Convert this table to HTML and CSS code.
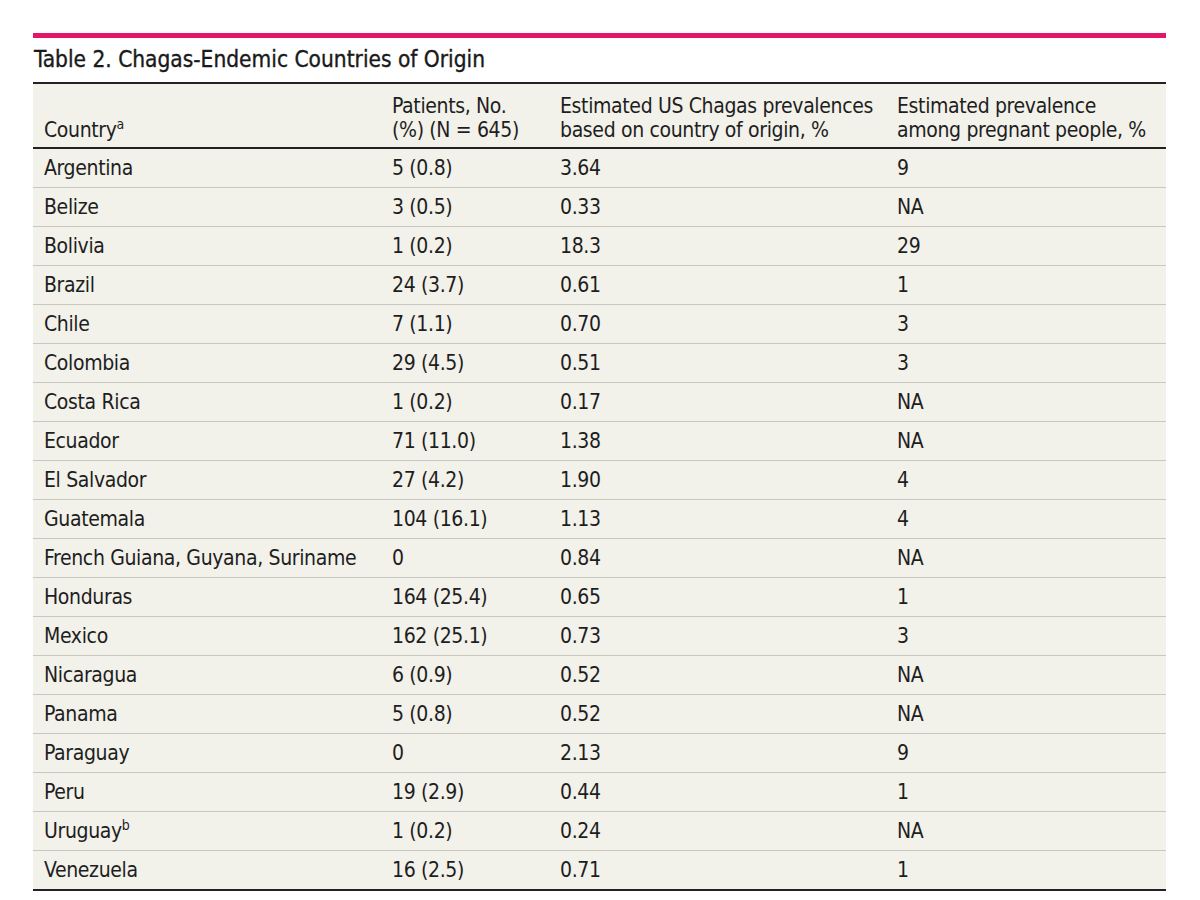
FILE: index.html
```html
<!DOCTYPE html>
<html lang="en">
<head>
<meta charset="utf-8">
<title>Table 2. Chagas-Endemic Countries of Origin</title>
<link rel="stylesheet" href="styles.css">
</head>
<body>
<div class="page">
  <div class="accent"></div>
  <h1 class="title">Table 2. Chagas-Endemic Countries of Origin</h1>
  <table class="data">
    <colgroup>
      <col class="w1">
      <col class="w2">
      <col class="w3">
      <col class="w4">
    </colgroup>
    <thead>
      <tr>
        <th>Country<sup>a</sup></th>
        <th>Patients, No.<br>(%) (N = 645)</th>
        <th>Estimated US Chagas prevalences<br>based on country of origin, %</th>
        <th>Estimated prevalence<br>among pregnant people, %</th>
      </tr>
    </thead>
    <tbody>
      <tr><td>Argentina</td><td>5 (0.8)</td><td>3.64</td><td>9</td></tr>
      <tr><td>Belize</td><td>3 (0.5)</td><td>0.33</td><td>NA</td></tr>
      <tr><td>Bolivia</td><td>1 (0.2)</td><td>18.3</td><td>29</td></tr>
      <tr><td>Brazil</td><td>24 (3.7)</td><td>0.61</td><td>1</td></tr>
      <tr><td>Chile</td><td>7 (1.1)</td><td>0.70</td><td>3</td></tr>
      <tr><td>Colombia</td><td>29 (4.5)</td><td>0.51</td><td>3</td></tr>
      <tr><td>Costa Rica</td><td>1 (0.2)</td><td>0.17</td><td>NA</td></tr>
      <tr><td>Ecuador</td><td>71 (11.0)</td><td>1.38</td><td>NA</td></tr>
      <tr><td>El Salvador</td><td>27 (4.2)</td><td>1.90</td><td>4</td></tr>
      <tr><td>Guatemala</td><td>104 (16.1)</td><td>1.13</td><td>4</td></tr>
      <tr><td>French Guiana, Guyana, Suriname</td><td>0</td><td>0.84</td><td>NA</td></tr>
      <tr><td>Honduras</td><td>164 (25.4)</td><td>0.65</td><td>1</td></tr>
      <tr><td>Mexico</td><td>162 (25.1)</td><td>0.73</td><td>3</td></tr>
      <tr><td>Nicaragua</td><td>6 (0.9)</td><td>0.52</td><td>NA</td></tr>
      <tr><td>Panama</td><td>5 (0.8)</td><td>0.52</td><td>NA</td></tr>
      <tr><td>Paraguay</td><td>0</td><td>2.13</td><td>9</td></tr>
      <tr><td>Peru</td><td>19 (2.9)</td><td>0.44</td><td>1</td></tr>
      <tr><td>Uruguay<sup>b</sup></td><td>1 (0.2)</td><td>0.24</td><td>NA</td></tr>
      <tr><td>Venezuela</td><td>16 (2.5)</td><td>0.71</td><td>1</td></tr>
    </tbody>
  </table>
</div>
</body>
</html>
```

FILE: styles.css
```css
html, body {
  margin: 0;
  padding: 0;
  background: #ffffff;
}

body {
  font-family: "DejaVu Sans Condensed", "DejaVu Sans", sans-serif;
  color: #1e1e1e;
}

.page {
  padding: 33px 34px 0 33px;
}

.accent {
  height: 5px;
  background: #e3166c;
}

.title {
  margin: 7px 0 9px 1px;
  font-size: 22.5px;
  line-height: 28px;
  font-weight: normal;
  color: #1a1a1a;
  -webkit-text-stroke: 0.35px #1a1a1a;
  white-space: nowrap;
}

.data {
  width: 1133px;
  border-collapse: separate;
  border-spacing: 0;
  background: #f2f1ea;
  border-top: 2px solid #222;
  font-size: 21px;
  letter-spacing: -0.35px;
  table-layout: fixed;
}

.w1 { width: 349px; }
.w2 { width: 168px; }
.w3 { width: 337px; }
.w4 { width: 279px; }

.data th {
  text-align: left;
  font-weight: normal;
  vertical-align: bottom;
  line-height: 24px;
  padding: 10px 6px 5px 11px;
  border-bottom: 2px solid #222;
  white-space: nowrap;
}

.data th + th,
.data td + td {
  padding-left: 10px;
}

.data td {
  line-height: 38px;
  padding: 0 6px 0 11px;
  border-bottom: 1px solid #c9c8c0;
  white-space: nowrap;
}

.data tbody tr:last-child td {
  border-bottom: 2px solid #222;
}

.data sup {
  font-size: 14px;
  line-height: 0;
  vertical-align: 8px;
  letter-spacing: 0;
}
```
